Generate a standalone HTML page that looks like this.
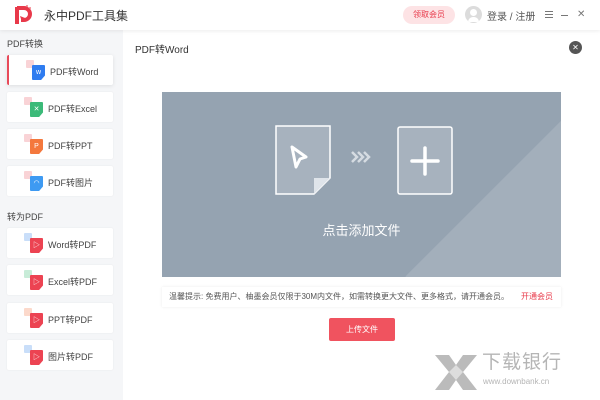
<!DOCTYPE html>
<html><head><meta charset="utf-8"><style>
*{margin:0;padding:0;box-sizing:border-box}
html,body{width:600px;height:400px;overflow:hidden}
body{background:#fff;font-family:"Liberation Sans","Noto Sans CJK SC",sans-serif;color:#333;position:relative}
.hdr{position:absolute;left:0;top:0;width:600px;height:30px;background:#fff;box-shadow:0 1px 4px rgba(0,0,0,.08);z-index:2}
.side{position:absolute;left:0;top:30px;width:123px;height:370px;background:#f5f6f8}
.sec{position:absolute;left:7px;font-size:9px;color:#444}
.card{position:absolute;left:7px;width:106px;height:30px;background:#fff;border-radius:2px;box-shadow:0 0 2px rgba(0,0,0,.06);font-size:9px;color:#444}
.card span{position:absolute;left:41px;top:10px}
.card.act{border-left:2px solid #e84a5a;box-shadow:0 1px 4px rgba(0,0,0,.1)}
.ic{position:absolute;left:17px;top:5px;width:22px;height:22px}
.ic .b{position:absolute;left:0;top:0;width:8px;height:8px;border-radius:1px}
.ic .f{position:absolute;left:6px;top:5px;width:13px;height:15px;border-radius:1px;clip-path:polygon(0 0,100% 0,100% 70%,70% 100%,0 100%);color:#fff;font-size:7px;text-align:center;line-height:15px}
</style></head><body>
<div class="hdr">
 <svg style="position:absolute;left:12px;top:3px" width="24" height="24" viewBox="0 0 24 24"><path d="M5 4v17" stroke="#e8394a" stroke-width="4"/><path d="M5 5h7a6 6 0 0 1 0 12h-3" fill="none" stroke="#e8394a" stroke-width="4"/><path d="M8 13l5 2-3 4z" fill="#e8394a"/><circle cx="15" cy="3" r="1" fill="#f07a84"/><circle cx="18" cy="5" r="1" fill="#f07a84"/></svg>
 <div style="position:absolute;left:44px;top:7px;font-size:12px;color:#333">永中PDF工具集</div>
 <div style="position:absolute;left:403px;top:6px;width:52px;height:18px;border-radius:9px;background:#fde3e5;color:#e8394a;font-size:8px;text-align:center;line-height:18px">领取会员</div>
 <div style="position:absolute;left:465px;top:6px;width:17px;height:17px;border-radius:50%;background:#dcdcdc;overflow:hidden"><div style="position:absolute;left:5px;top:3px;width:7px;height:7px;border-radius:50%;background:#fff"></div><div style="position:absolute;left:3px;top:11px;width:11px;height:5px;border-radius:5px 5px 0 0;background:#fff"></div></div>
 <div style="position:absolute;left:487px;top:8px;font-size:10px;color:#555">登录 / 注册</div>
 <div style="position:absolute;left:545px;top:11px;width:8px;height:1px;background:#777;box-shadow:0 3px 0 #777,0 6px 0 #777"></div>
 <div style="position:absolute;left:561px;top:15px;width:7px;height:1px;background:#777"></div>
 <div style="position:absolute;left:577px;top:9px;font-size:10px;color:#777">✕</div>
</div>
<div class="side">
 <div class="sec" style="top:7px">PDF转换</div>
 <div class="sec" style="top:180px">转为PDF</div>
</div>
<div class="card act" style="top:55px"><div class="ic"><div class="b" style="background:#f9d3d6"></div><div class="f" style="background:#2f7cf0">w</div></div><span>PDF转Word</span></div>
<div class="card" style="top:92px"><div class="ic"><div class="b" style="background:#f9d3d6"></div><div class="f" style="background:#3cba79">✕</div></div><span>PDF转Excel</span></div>
<div class="card" style="top:129px"><div class="ic"><div class="b" style="background:#f9d3d6"></div><div class="f" style="background:#f4783d">P</div></div><span>PDF转PPT</span></div>
<div class="card" style="top:166px"><div class="ic"><div class="b" style="background:#f9d3d6"></div><div class="f" style="background:#3e9af2">◠</div></div><span>PDF转图片</span></div>
<div class="card" style="top:228px"><div class="ic"><div class="b" style="background:#c9def9"></div><div class="f" style="background:#ec4352">▷</div></div><span>Word转PDF</span></div>
<div class="card" style="top:265px"><div class="ic"><div class="b" style="background:#c8ecd8"></div><div class="f" style="background:#ec4352">▷</div></div><span>Excel转PDF</span></div>
<div class="card" style="top:303px"><div class="ic"><div class="b" style="background:#fcd9cb"></div><div class="f" style="background:#ec4352">▷</div></div><span>PPT转PDF</span></div>
<div class="card" style="top:340px"><div class="ic"><div class="b" style="background:#c9def9"></div><div class="f" style="background:#ec4352">▷</div></div><span>图片转PDF</span></div>

<div style="position:absolute;left:135px;top:41px;font-size:10px;color:#333">PDF转Word</div>
<div style="position:absolute;left:569px;top:41px;width:13px;height:13px;border-radius:50%;background:#555;color:#fff;font-size:8px;text-align:center;line-height:13px">✕</div>

<div style="position:absolute;left:162px;top:92px;width:399px;height:185px;background:#95a3b1;overflow:hidden">
 <div style="position:absolute;left:300px;top:40px;width:300px;height:300px;background:#a3afbb;transform:rotate(45deg);border-radius:10px"></div>
 <svg style="position:absolute;left:0;top:0" width="399" height="185">
  <path d="M114 34h54v52l-16 16h-38z" fill="#a7b2be" stroke="#fff" stroke-width="1.5"/>
  <path d="M152 102v-16h16" fill="#dfe4ea"/>
  <path d="M130 55l14 10-6 2-4 8z" fill="none" stroke="#fff" stroke-width="3" stroke-linejoin="round"/>
  <path d="M190 60l5 5-5 5M196 60l5 5-5 5M202 60l5 5-5 5" fill="none" stroke="#d5dbe2" stroke-width="2.5"/>
  <rect x="236" y="35" width="54" height="67" rx="2" fill="#a7b2be" stroke="#fff" stroke-width="1.5"/>
  <path d="M263 56v26M250 69h26" stroke="#fff" stroke-width="3.5" stroke-linecap="round"/>
 </svg>
 <div style="position:absolute;left:0;width:399px;top:128px;text-align:center;font-size:13px;color:#fff">点击添加文件</div>
</div>
<div style="position:absolute;left:162px;top:287px;width:399px;height:20px;background:#fff;box-shadow:0 0 3px rgba(0,0,0,.08);font-size:8px;color:#555;line-height:20px;padding-left:7px;overflow:hidden;white-space:nowrap">温馨提示: 免费用户、柚墨会员仅限于30M内文件，如需转换更大文件、更多格式，请开通会员。<span style="position:absolute;right:8px;color:#e8394a">开通会员</span></div>
<div style="position:absolute;left:329px;top:318px;width:66px;height:23px;background:#f0535f;border-radius:2px;color:#fff;font-size:8px;text-align:center;line-height:23px">上传文件</div>

<svg style="position:absolute;left:435px;top:355px" width="42" height="35" viewBox="0 0 42 35"><path d="M0 0h14l7 10 7-10h14l-14 17 14 18h-14l-7-10-7 10h-14l14-18z" fill="#bbb"/><path d="M14 17l7-7 7 7-7 8z" fill="#ddd"/></svg>
<div style="position:absolute;left:482px;top:352px;font-size:19px;line-height:22px;color:#b5b5b5;letter-spacing:1px">下载银行</div>
<div style="position:absolute;left:483px;top:377px;font-size:8px;line-height:10px;color:#b5b5b5">www.downbank.cn</div>
</body></html>
